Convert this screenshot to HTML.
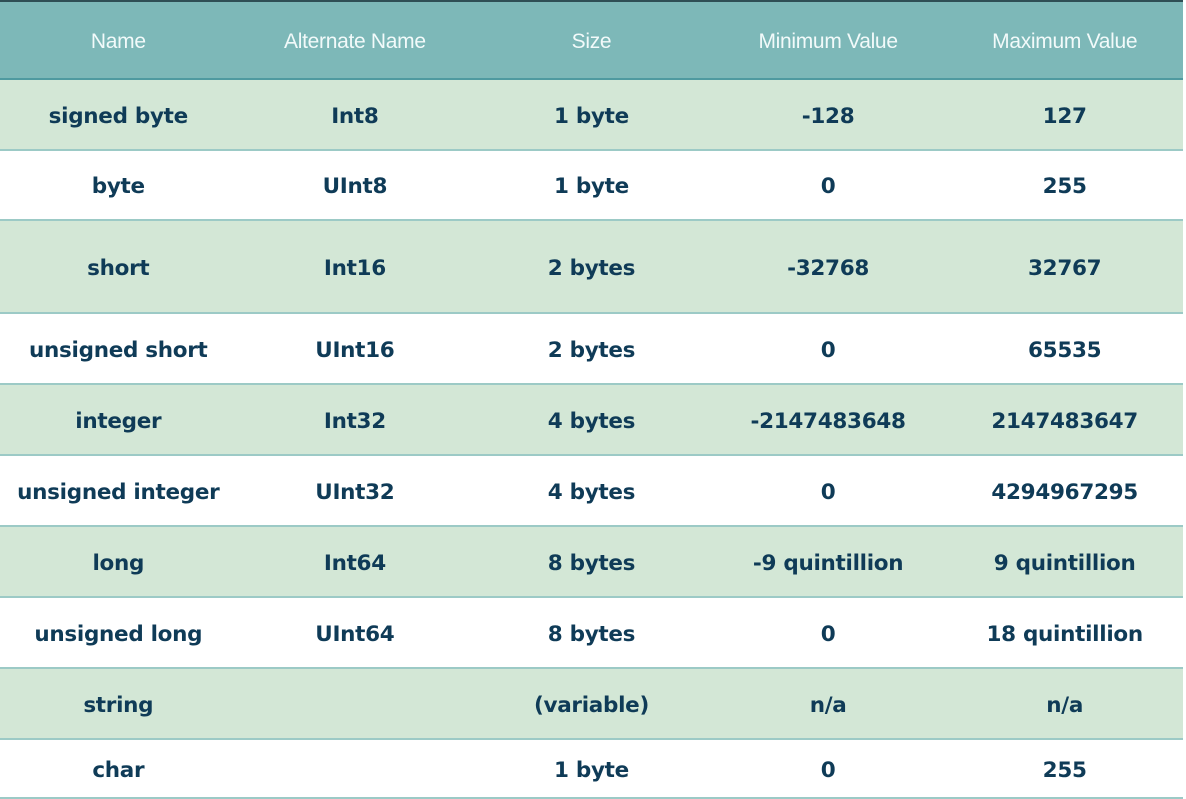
<!DOCTYPE html>
<html><head><style>
html,body{margin:0;padding:0;background:#fff;width:1186px;height:799px;overflow:hidden}
.t{position:absolute;left:0;top:0;width:1183px;border-top:2px solid #2f4f55}
.r{display:flex;align-items:center;box-sizing:border-box;border-bottom:2px solid #9ccac6}
.r div{width:236.6px;text-align:center;font-family:"DejaVu Sans","Liberation Sans",sans-serif;font-weight:bold;font-size:21.5px;color:#0f3b57;letter-spacing:-0.3px;padding-top:3px}
.h{background:#7db8b8;height:78px;border-bottom:2px solid #4f9aa0}
.h div{font-weight:normal;color:#f2fafa;font-size:21px;font-family:"Liberation Sans",sans-serif}
.g{background:#d3e7d6}
</style></head><body>
<div class="t">
<div class="r h" style="height:78px"><div>Name</div><div>Alternate Name</div><div>Size</div><div>Minimum Value</div><div>Maximum Value</div></div>
<div class="r g" style="height:71px"><div>signed byte</div><div>Int8</div><div>1 byte</div><div>-128</div><div>127</div></div>
<div class="r" style="height:70px"><div>byte</div><div>UInt8</div><div>1 byte</div><div>0</div><div>255</div></div>
<div class="r g" style="height:93px"><div>short</div><div>Int16</div><div>2 bytes</div><div>-32768</div><div>32767</div></div>
<div class="r" style="height:71px"><div>unsigned short</div><div>UInt16</div><div>2 bytes</div><div>0</div><div>65535</div></div>
<div class="r g" style="height:71px"><div>integer</div><div>Int32</div><div>4 bytes</div><div>-2147483648</div><div>2147483647</div></div>
<div class="r" style="height:71px"><div>unsigned integer</div><div>UInt32</div><div>4 bytes</div><div>0</div><div>4294967295</div></div>
<div class="r g" style="height:71px"><div>long</div><div>Int64</div><div>8 bytes</div><div>-9 quintillion</div><div>9 quintillion</div></div>
<div class="r" style="height:71px"><div>unsigned long</div><div>UInt64</div><div>8 bytes</div><div>0</div><div>18 quintillion</div></div>
<div class="r g" style="height:71px"><div>string</div><div></div><div>(variable)</div><div>n/a</div><div>n/a</div></div>
<div class="r" style="height:59px"><div>char</div><div></div><div>1 byte</div><div>0</div><div>255</div></div>
</div>
</body></html>
